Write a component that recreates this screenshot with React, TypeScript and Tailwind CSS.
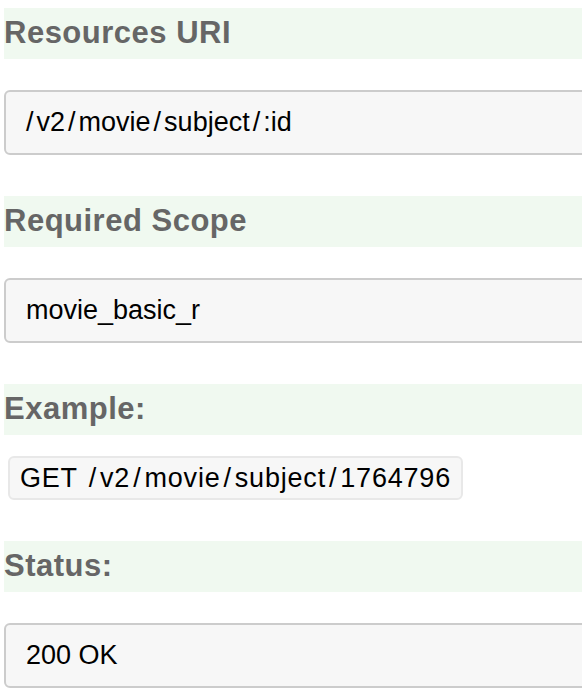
const sections = [
  { title: "Resources URI", kind: "box", value: "/v2/movie/subject/:id" },
  { title: "Required Scope", kind: "box", value: "movie_basic_r" },
  { title: "Example:", kind: "code", value: "GET /v2/movie/subject/1764796" },
  { title: "Status:", kind: "box", value: "200 OK" },
];

// slashes sit a bit wider in the original rendering
const Path = ({ text }: { text: string }) => {
  const parts = text.split("/");
  return (
    <>
      {parts.map((part, i) => (
        <span key={i}>
          {i > 0 && (
            <span className={parts[i - 1] === "" ? "mr-[3px]" : "mx-[3px]"}>
              /
            </span>
          )}
          {part}
        </span>
      ))}
    </>
  );
};

const App = () => {
  return (
    <div
      className="w-full overflow-hidden bg-white pt-2 pl-1"
      style={{ fontFamily: '"Liberation Sans", Arial, sans-serif' }}
    >
      {sections.map((s, i) => (
        <div key={s.title} className={i > 0 ? "mt-[41px]" : ""}>
          <h2 className="flex h-[51px] w-[620px] items-center bg-[#f0f9f0] text-[31px] font-bold tracking-[0.5px] text-[#666]">
            {s.title}
          </h2>
          {s.kind === "box" ? (
            <div className="mt-[31px] flex h-[65px] w-[620px] items-center whitespace-pre rounded-md border-2 border-[#ccc] bg-[#f7f7f7] pl-5 text-[27px] text-black">
              <Path text={s.value} />
            </div>
          ) : (
            <div className="mt-[21px] ml-1 inline-flex h-[44px] items-center whitespace-pre rounded-md border-2 border-[#e8e8e8] bg-[#f7f7f7] px-[10px] text-[27px] tracking-[0.8px] text-black">
              <Path text={s.value} />
            </div>
          )}
        </div>
      ))}
    </div>
  );
};

export default App;
